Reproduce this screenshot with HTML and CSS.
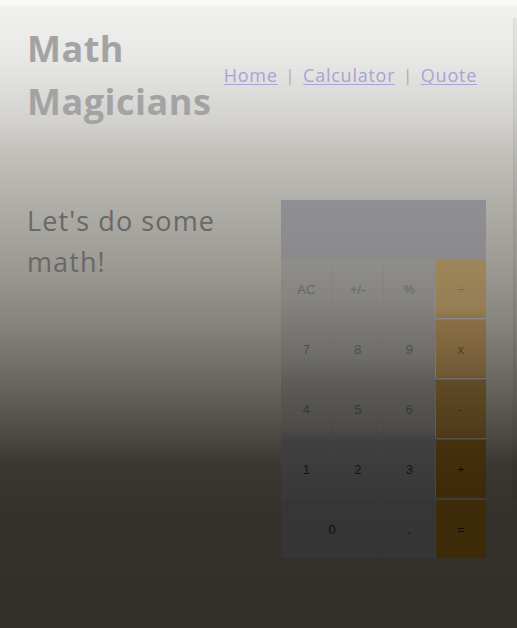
FILE: index.html
```html
<!DOCTYPE html>
<html lang="en">
<head>
<meta charset="utf-8">
<title>Math Magicians</title>
<link rel="stylesheet" href="styles.css">
</head>
<body>
<header class="header">
  <h1 class="title">Math Magicians</h1>
  <nav class="nav">
    <a href="#" class="nav-link">Home</a>
    <span class="sep">|</span>
    <a href="#" class="nav-link">Calculator</a>
    <span class="sep">|</span>
    <a href="#" class="nav-link">Quote</a>
  </nav>
</header>
<main class="main">
  <p class="intro">Let's do some math!</p>
  <div class="calc">
    <div class="display"></div>
    <button class="key r1">AC</button>
    <button class="key r1">+/-</button>
    <button class="key r1">%</button>
    <button class="key op o1">÷</button>
    <button class="key r2">7</button>
    <button class="key r2">8</button>
    <button class="key r2">9</button>
    <button class="key op o2">x</button>
    <button class="key r3">4</button>
    <button class="key r3">5</button>
    <button class="key r3">6</button>
    <button class="key op o3">-</button>
    <button class="key r4">1</button>
    <button class="key r4">2</button>
    <button class="key r4">3</button>
    <button class="key op o4">+</button>
    <button class="key r5 zero">0</button>
    <button class="key r5">.</button>
    <button class="key op o5">=</button>
  </div>
</main>
</body>
</html>
```
FILE: styles.css
```css
html {
  min-height: 100%;
  background: linear-gradient(to bottom,
    #fafaf9 0px, #f9f9f8 5px, #f1f1ef 7px, #e7e7e5 60px,
    #d3d2cf 120px, #c3c2bd 150px, #b1afa9 200px, #9e9c95 260px,
    #88857e 320px, #6b6861 380px, #4f4c46 432px, #3a3731 466px,
    #34312c 520px, #33302b 628px) fixed;
}

body {
  margin: 0;
  font-family: "Open Sans", "DejaVu Sans", sans-serif;
  min-height: 628px;
  position: relative;
}

body::after {
  content: "";
  position: absolute;
  top: 18px;
  right: 0;
  width: 3px;
  height: 482px;
  background: rgba(0, 0, 0, 0.05);
  border-left: 1px solid rgba(0, 0, 0, 0.04);
}

.header {
  display: flex;
  align-items: center;
  gap: 8px;
  padding: 22px 40px 0 27px;
}

.title {
  flex: 1;
  margin: 0;
  font-size: 36px;
  font-weight: 700;
  line-height: 53px;
  letter-spacing: 0.5px;
  color: #a3a3a3;
}

.nav {
  flex: none;
  display: flex;
  align-items: center;
  gap: 8px;
  font-size: 18px;
  letter-spacing: 0.75px;
  white-space: nowrap;
}

.nav-link {
  color: #a7a4d6;
  text-decoration: underline;
  text-decoration-thickness: 1px;
  text-underline-offset: 2px;
}

.sep {
  color: #ababab;
  font-size: 16px;
}

.main {
  display: flex;
  align-items: flex-start;
  gap: 20px;
  padding: 72px 31px 0 27px;
}

.intro {
  flex: 1;
  margin: 0;
  font-size: 27px;
  line-height: 41px;
  letter-spacing: 1.1px;
  color: #686867;
}

.calc {
  flex: none;
  width: 205px;
  display: grid;
  grid-template-columns: repeat(4, 1fr);
  grid-template-rows: 58px repeat(5, 58px);
  column-gap: 1px;
  row-gap: 2px;
  background: linear-gradient(to bottom,
    #8c8b8f 200px, #8a8a89 260px, #7c7b78 320px, #5f5e5b 380px,
    #434241 440px, #383838 500px, #343434 560px) fixed;
}

.display {
  grid-column: 1 / -1;
  background: linear-gradient(to bottom, #908f95 200px, #8a898e 258px) fixed;
}

.key {
  border: 0;
  padding: 0;
  margin: 0;
  font-family: "Liberation Sans", Arial, sans-serif;
  font-size: 13px;
  background: linear-gradient(to bottom,
    #8f8e8b 260px, #85847f 300px, #7c7b78 320px, #6c6b68 360px,
    #5d5c59 380px, #4c4b48 430px, #404040 440px, #383838 495px,
    #363636 500px, #353535 560px) fixed;
}

.zero {
  grid-column: span 2;
}

.op {
  background: linear-gradient(to bottom,
    #9f875c 260px, #957c52 310px, #8a6f46 320px, #725a35 375px,
    #604a27 380px, #4f3b1a 435px, #46310e 440px, #3d2a09 495px,
    #3e2b0a 500px, #3c2a09 560px) fixed;
}

.o1 { box-shadow: 0 1px 0 #888888, -1px 0 0 #8a8a8a; }
.o2 { box-shadow: 0 1px 0 #6e6e6e, -1px 0 0 #777777; }
.o3 { box-shadow: 0 1px 0 #545454, -1px 0 0 #5c5c5c; }
.o4 { box-shadow: 0 1px 0 #404040, -1px 0 0 #454545; }
.o5 { box-shadow: -1px 0 0 #3a3a3a; }

.r1 { color: #666666; }
.r2 { color: #4e4e4e; }
.r3 { color: #393939; }
.r4 { color: #151515; }
.r5 { color: #0e0e0e; }

.o1 { color: #84694a; }
.o2 { color: #503f26; }
.o3 { color: #3a2c14; }
.o4 { color: #150d02; }
.o5 { color: #100b04; }
```
